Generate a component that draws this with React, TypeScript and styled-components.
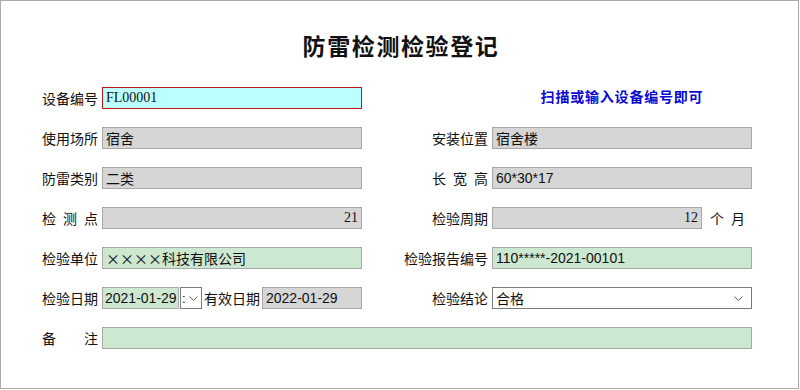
import styled, { createGlobalStyle } from "styled-components";

const colors = {
  cyan: "#bdffff",
  gray: "#d6d6d6",
  green: "#cde8d0",
  white: "#ffffff",
  border: "#a8a8a8",
  dark: "#7a7a7a",
  red: "#c01818",
  blue: "#0a0ad2",
};

const fonts = {
  sans: `"Liberation Sans", "Noto Sans CJK SC", sans-serif`,
  serif: `"Liberation Serif", "Noto Sans CJK SC", serif`,
  cjk: `"Noto Sans CJK SC", sans-serif`,
};

const GlobalStyle = createGlobalStyle`
  html, body {
    margin: 0;
    padding: 0;
    background: #ffffff;
  }
  body {
    font-family: "Noto Sans CJK SC", "Noto Sans", sans-serif;
    color: #111111;
  }
`;

const Frame = styled.div`
  box-sizing: border-box;
  width: 799px;
  height: 389px;
  border: 1px solid #aaaaaa;
  background: #ffffff;
`;

const Title = styled.h1`
  margin: 0;
  padding-top: 29px;
  padding-left: 3px;
  line-height: 30px;
  font-size: 23px;
  font-weight: 700;
  letter-spacing: 1.6px;
  text-align: center;
  color: #111111;
`;

const Form = styled.div`
  display: grid;
  grid-template-columns: 70px 260px 122px 260px;
  grid-auto-rows: 22px;
  column-gap: 4px;
  row-gap: 18px;
  margin-top: 27px;
  padding-left: 27px;
`;

const Label = styled.div`
  display: flex;
  align-items: center;
  justify-content: flex-end;
  padding-bottom: 1px;
  font-size: 14px;
  white-space: nowrap;
`;

const Spread = styled.span<{ $width: number }>`
  display: flex;
  justify-content: space-between;
  width: ${(p) => p.$width}px;
`;

type FontKind = keyof typeof fonts;

const Field = styled.div<{
  $bg: string;
  $border?: string;
  $right?: boolean;
  $font?: FontKind;
  $width?: number;
  $span?: string;
}>`
  box-sizing: border-box;
  height: 22px;
  ${(p) => (p.$width ? `width: ${p.$width}px; flex: none;` : "flex: 1;")}
  ${(p) => (p.$span ? `grid-column: ${p.$span};` : "")}
  border: 1px solid ${(p) => p.$border ?? colors.border};
  background: ${(p) => p.$bg};
  padding: 0 3px;
  display: flex;
  align-items: center;
  justify-content: ${(p) => (p.$right ? "flex-end" : "flex-start")};
  font-family: ${(p) => fonts[p.$font ?? "sans"]};
  font-size: 14px;
  white-space: nowrap;
  overflow: hidden;
`;

const Hint = styled.div`
  display: flex;
  align-items: center;
  justify-content: center;
  padding-bottom: 4px;
  font-size: 14px;
  font-weight: 700;
  letter-spacing: 0.8px;
  color: ${colors.blue};
`;

const Cell = styled.div`
  display: flex;
  align-items: center;
`;

const Unit = styled(Spread)`
  margin-left: 8px;
  font-size: 14px;
`;

const InlineLabel = styled(Label)`
  margin: 0 2px;
  height: 22px;
`;

const DropButton = styled.div`
  box-sizing: border-box;
  width: 22px;
  height: 22px;
  margin-left: 1px;
  border: 1px solid ${colors.dark};
  background: ${colors.white};
  display: flex;
  align-items: center;
  padding-left: 1px;
  gap: 3px;
  font-family: ${fonts.sans};
  font-size: 13px;
`;

const Select = styled(Field)`
  justify-content: space-between;
  padding-right: 8px;
`;

const Chevron = () => (
  <svg width="9" height="5" viewBox="0 0 9 5">
    <polyline points="0.5,0.5 4.5,4.5 8.5,0.5" fill="none" stroke="#666" strokeWidth="1" />
  </svg>
);

const App = () => {
  return (
    <Frame>
      <GlobalStyle />
      <Title>防雷检测检验登记</Title>
      <Form>
        <Label>设备编号</Label>
        <Field $bg={colors.cyan} $border={colors.red} $font="serif">
          FL00001
        </Field>
        <div />
        <Hint>扫描或输入设备编号即可</Hint>

        <Label>使用场所</Label>
        <Field $bg={colors.gray}>宿舍</Field>
        <Label>安装位置</Label>
        <Field $bg={colors.gray}>宿舍楼</Field>

        <Label>防雷类别</Label>
        <Field $bg={colors.gray}>二类</Field>
        <Label>
          <Spread $width={56}>
            <span>长</span>
            <span>宽</span>
            <span>高</span>
          </Spread>
        </Label>
        <Field $bg={colors.gray}>60*30*17</Field>

        <Label>
          <Spread $width={56}>
            <span>检</span>
            <span>测</span>
            <span>点</span>
          </Spread>
        </Label>
        <Field $bg={colors.gray} $right $font="serif">
          21
        </Field>
        <Label>检验周期</Label>
        <Cell>
          <Field $bg={colors.gray} $right $font="serif" $width={210}>
            12
          </Field>
          <Unit $width={35}>
            <span>个</span>
            <span>月</span>
          </Unit>
        </Cell>

        <Label>检验单位</Label>
        <Field $bg={colors.green} $font="cjk">
          ××××科技有限公司
        </Field>
        <Label>检验报告编号</Label>
        <Field $bg={colors.green}>110*****-2021-00101</Field>

        <Label>检验日期</Label>
        <Cell>
          <Field $bg={colors.green} $width={77} style={{ paddingLeft: 2 }}>
            2021-01-29
          </Field>
          <DropButton>
            <span>:</span>
            <Chevron />
          </DropButton>
          <InlineLabel>有效日期</InlineLabel>
          <Field $bg={colors.gray}>2022-01-29</Field>
        </Cell>
        <Label>检验结论</Label>
        <Select $bg={colors.white} $border={colors.dark}>
          <span>合格</span>
          <Chevron />
        </Select>

        <Label>
          <Spread $width={56}>
            <span>备</span>
            <span>注</span>
          </Spread>
        </Label>
        <Field $bg={colors.green} $span="2 / 5" />
      </Form>
    </Frame>
  );
};

export default App;
